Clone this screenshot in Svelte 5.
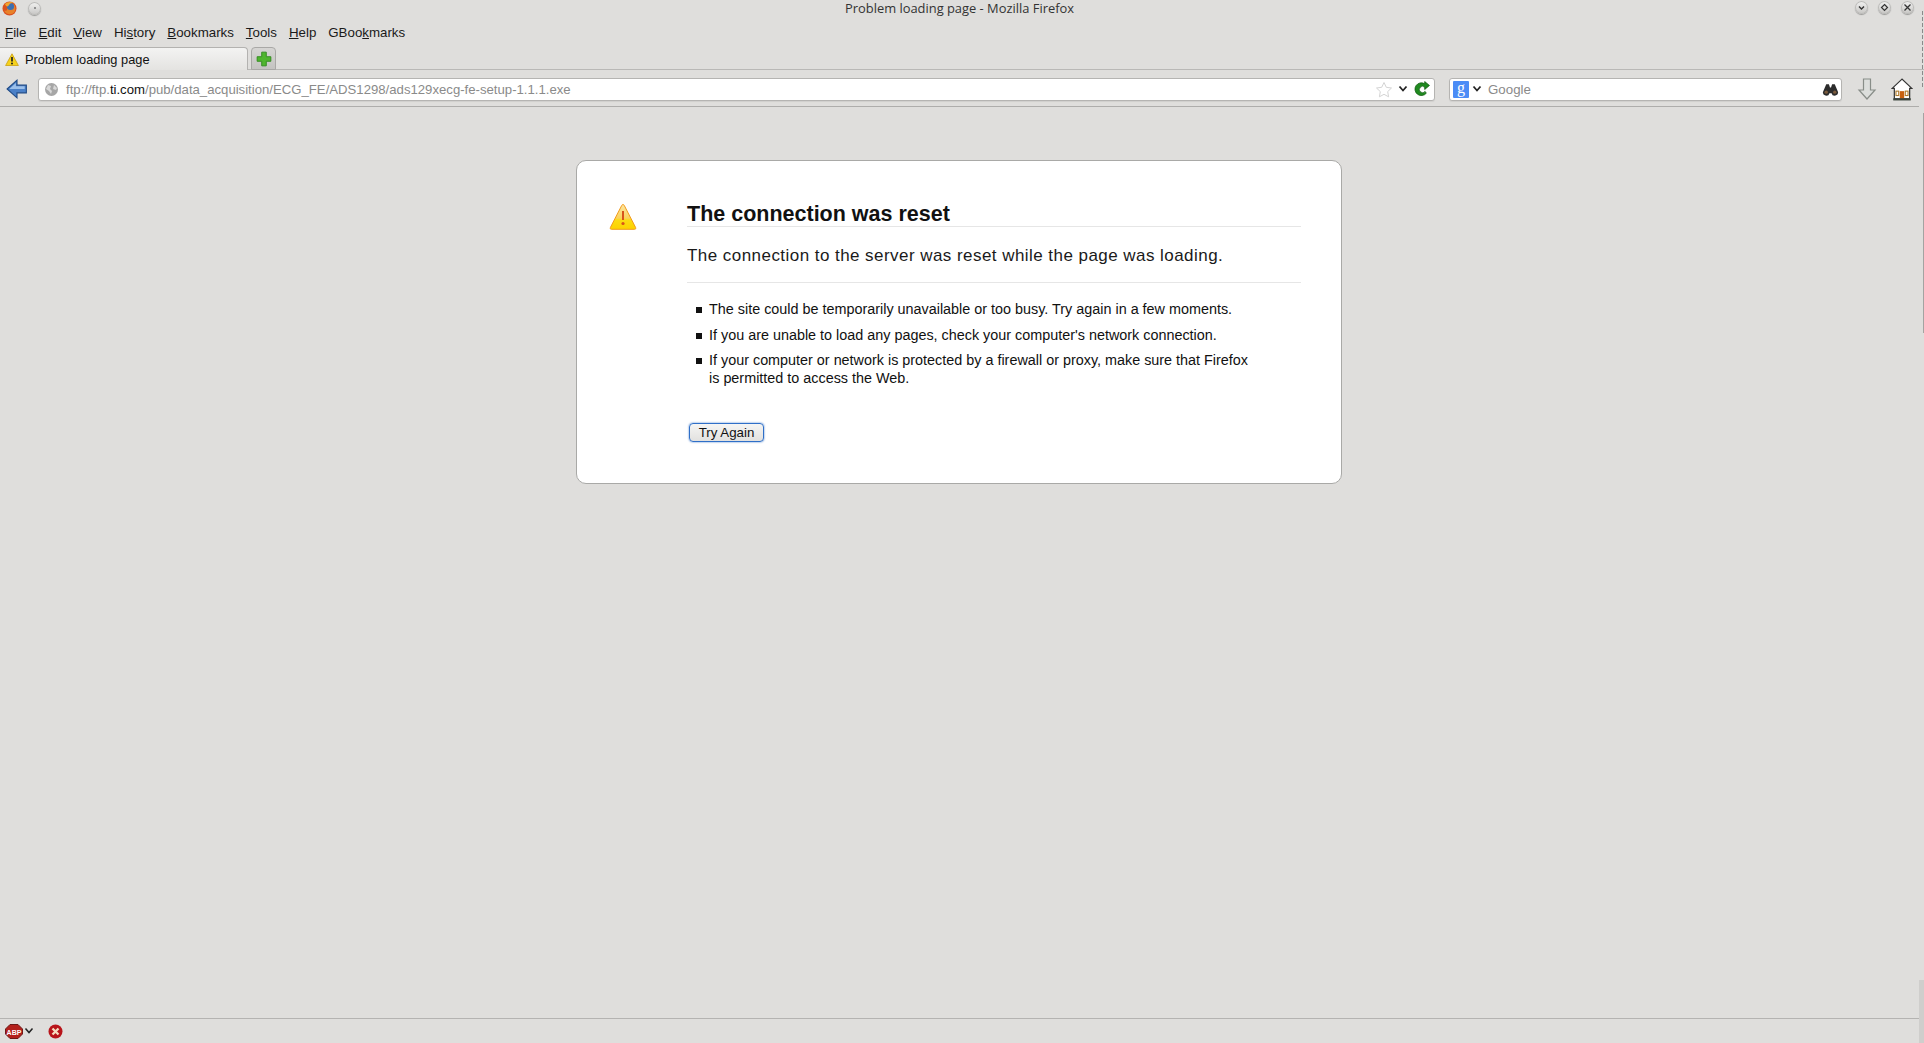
<script>
  const menus = [
    ['F', 'ile'], ['E', 'dit'], ['V', 'iew'], ['Hi', 's', 'tory'], ['B', 'ookmarks'], ['T', 'ools'], ['H', 'elp'], ['GBoo', 'k', 'marks']
  ];
  const bullets = [
    'The site could be temporarily unavailable or too busy. Try again in a few moments.',
    "If you are unable to load any pages, check your computer's network connection.",
    'If your computer or network is protected by a firewall or proxy, make sure that Firefox is permitted to access the Web.'
  ];
</script>

<div class="window">
  <header class="titlebar">
    <div class="tb-left">
      <svg class="ff" width="15" height="15" viewBox="0 0 15 15">
        <circle cx="7.5" cy="7.5" r="7" fill="#d9501e" />
        <path d="M2 9a6 6 0 0 0 11 1c1-3 0-6-2-8 1 3-1 4-3 4S5 8 5 9 2 10 2 9z" fill="#e8822a" />
        <circle cx="8.5" cy="5.5" r="3.6" fill="#3d6fb0" />
        <path d="M3 3c2-2 6-3 9-1-2 0-4 0-5 2S4 6 3 3z" fill="#f2a32c" />
      </svg>
      <span class="wbtn small"><i class="dot"></i></span>
    </div>
    <div class="title">Problem loading page - Mozilla Firefox</div>
    <div class="tb-right">
      <span class="wbtn">
        <svg width="9" height="9" viewBox="0 0 9 9"><path d="M2 3.5l2.5 2.5L7 3.5" fill="none" stroke="#333" stroke-width="1.4" /></svg>
      </span>
      <span class="wbtn">
        <svg width="9" height="9" viewBox="0 0 9 9"><path d="M4.5 1.5l3 3-3 3-3-3z" fill="none" stroke="#333" stroke-width="1.2" /></svg>
      </span>
      <span class="wbtn">
        <svg width="9" height="9" viewBox="0 0 9 9"><path d="M1.5 1.5l6 6M7.5 1.5l-6 6" fill="none" stroke="#333" stroke-width="1.3" /></svg>
      </span>
    </div>
  </header>

  <nav class="menubar">
    {#each menus as m}
      <span class="menu">
        {#if m.length === 2}<u>{m[0]}</u>{m[1]}{:else}{m[0]}<u>{m[1]}</u>{m[2]}{/if}
      </span>
    {/each}
  </nav>

  <div class="tabbar">
    <div class="tab">
      <svg width="14" height="13" viewBox="0 0 14 13"><path d="M7 .8L13.4 12.5H.6z" fill="#f6d21c" stroke="#c9a010" stroke-width=".8" /><path d="M7 4v4.6" stroke="#222" stroke-width="1.7" /><circle cx="7" cy="10.4" r="1" fill="#222" /></svg>
      <span>Problem loading page</span>
    </div>
    <div class="newtab">
      <svg width="16" height="16" viewBox="0 0 14 14"><path d="M5 1h4v4h4v4H9v4H5V9H1V5h4z" fill="#4fb52e" stroke="#2f8a1d" stroke-width=".8" /></svg>
    </div>
  </div>

  <div class="navbar">
    <svg class="back" width="22" height="20" viewBox="0 0 20 18"><path d="M1 9l9-8v4.500h8.500v7H10V17z" fill="#4a80c8" stroke="#1f4a86" stroke-width="1" /><path d="M3 9l6-5.500v3h8v2.500H3z" fill="#9cc0ea" /></svg>
    <div class="urlbar">
      <svg width="15" height="15" viewBox="0 0 15 15"><circle cx="7.5" cy="7.500" r="6.500" fill="#a6a6a6" /><path d="M4 3l3 1-1 3 2 2-1 3-2-3-3-2zM10 3l3 3-1 2-3-1z" fill="#d8d8d8" /></svg>
      <span class="url">ftp://ftp.<b>ti.com</b>/pub/data_acquisition/ECG_FE/ADS1298/ads129xecg-fe-setup-1.1.1.exe</span>
      <svg class="star" width="18" height="17" viewBox="0 0 18 17"><path d="M9 1.500l2.300 4.800 5.200.7-3.800 3.600.9 5.200L9 13.300l-4.600 2.500.9-5.200L1.500 7l5.200-.7z" fill="#fff" stroke="#d4d4d4" stroke-width="1" /></svg>
      <svg class="chev" width="10" height="8" viewBox="0 0 10 8"><path d="M1.500 1.500L5 5.500l3.500-4" fill="none" stroke="#222" stroke-width="1.800" /></svg>
      <svg width="17" height="17" viewBox="0 0 16 16"><path d="M12.500 11.500A6 6 0 1 1 11 2.600V.5l4.500 3.700L11 8V5.800a3 3 0 1 0 .4 4z" fill="#1f8a1f" stroke="#0f5a0f" stroke-width=".7" /></svg>
    </div>
    <div class="searchbar">
      <span class="g">g</span>
      <svg class="chev" width="10" height="8" viewBox="0 0 10 8"><path d="M1.500 1.500L5 5.500l3.500-4" fill="none" stroke="#222" stroke-width="1.800" /></svg>
      <span class="placeholder">Google</span>
      <svg width="17" height="13" viewBox="0 0 16 12"><path d="M4 1h2.500l1 3h1l1-3H12l3 7a3 3 0 0 1-6 1.500H7A3 3 0 0 1 1 8z" fill="#2c2c2c" /><circle cx="4" cy="8.500" r="1.600" fill="#7a5a3c" /><circle cx="12" cy="8.500" r="1.600" fill="#7a5a3c" /></svg>
    </div>
    <svg class="down" width="20" height="23" viewBox="0 0 20 23"><path d="M6.500 1h7v11h4.500L10 21 2 12h4.500z" fill="#dcdedc" stroke="#888d88" stroke-width="1.200" /></svg>
    <svg class="home" width="22" height="23" viewBox="0 0 20 21">
      <path d="M10 1L1 9.500h2V19h14V9.500h2z" fill="#fff" stroke="#333" stroke-width="1.100" />
      <rect x="8" y="12" width="4" height="7" fill="#c7600f" />
      <rect x="4.500" y="12" width="2.500" height="4" fill="#fff" stroke="#b07a28" />
      <rect x="13" y="12" width="2.500" height="4" fill="#fff" stroke="#b07a28" />
      <rect x="2" y="18.500" width="16" height="2" fill="#3c443c" />
    </svg>
  </div>

  <main class="content">
    <section class="card">
      <svg class="warn" width="28" height="28" viewBox="0 0 28 28">
        <defs><linearGradient id="w" x1="0" y1="0" x2="0" y2="1"><stop offset="0" stop-color="#fbe6a4" /><stop offset=".55" stop-color="#fbd25c" /><stop offset=".62" stop-color="#fbdc12" /><stop offset="1" stop-color="#fdd100" /></linearGradient></defs>
        <path d="M14 1.500c.6 0 1 .4 1.300 1L26.600 24.500c.5 1 0 1.800-1 1.800H2.400c-1 0-1.500-.8-1-1.800L12.700 2.500c.3-.6.700-1 1.300-1z" fill="url(#w)" stroke="#f29a1a" stroke-width="1" />
        <path d="M14 8v9" stroke="#d8541a" stroke-width="2" />
        <circle cx="14" cy="20.500" r="1.600" fill="#d8541a" />
      </svg>
      <div class="body">
        <h1>The connection was reset</h1>
        <p class="short">The connection to the server was reset while the page was loading.</p>
        <hr />
        <ul>
          {#each bullets as b}<li>{b}</li>{/each}
        </ul>
        <button type="button">Try Again</button>
      </div>
    </section>
  </main>

  <footer class="statusbar">
    <svg width="18" height="15" viewBox="0 0 18 15"><path d="M5 .5h8L17.500 5v5L13 14.500H5L.5 10V5z" fill="#b3201c" stroke="#6d1a18" /><text x="9" y="10.500" text-anchor="middle" class="abp">ABP</text></svg>
    <svg class="chev" width="10" height="8" viewBox="0 0 10 8"><path d="M1.500 1.500L5 5.500l3.500-4" fill="none" stroke="#222" stroke-width="1.500" /></svg>
    <svg class="stop" width="15" height="15" viewBox="0 0 15 15"><circle cx="7.500" cy="7.500" r="7" fill="#b8141a" /><path d="M4.500 4.500l6 6M10.500 4.500l-6 6" stroke="#f4dcc0" stroke-width="2.300" /></svg>
  </footer>

  <div class="edge-top"></div>
  <div class="edge-thumb"></div>
  <div class="edge-grip"></div>
</div>

<style>
  :global(body) {
    margin: 0;
    background: #dfdedc;
  }
  .window {
    position: relative;
    height: 1043px;
    display: flex;
    flex-direction: column;
    overflow: hidden;
    background: #dfdedc;
    color: #111;
    font-family: "Liberation Sans", Arial, sans-serif;
    font-size: 13px;
  }
  svg { display: block; flex: none; }
  .titlebar {
    height: 20px;
    display: grid;
    grid-template-columns: 1fr auto 1fr;
    align-items: center;
    flex: none;
    padding-right: 5px;
    box-sizing: border-box;
  }
  .tb-left { display: flex; align-items: center; gap: 11px; padding-left: 2px; margin-top: -4px; }
  .title { font-family: "Open Sans", "Noto Sans", sans-serif; font-size: 12.9px; color: #333; margin-top: -5px; }
  .tb-right { display: flex; justify-content: flex-end; gap: 10px; padding-right: 5px; margin-top: -6px; }
  .wbtn {
    width: 13px;
    height: 13px;
    border-radius: 50%;
    display: flex;
    align-items: center;
    justify-content: center;
    background: linear-gradient(#f3f3f2, #c6c5c3);
    box-shadow: 0 1px 1px #9a9a98, inset 0 0 0 1px #bbbab8;
  }
  .dot { width: 2px; height: 2px; background: #777; border-radius: 50%; }

  .menubar {
    height: 25px;
    display: flex;
    align-items: center;
    padding-left: 5px;
    gap: 12px;
    flex: none;
    font-size: 13.300px;
    color: #1a1a1a;
  }
  .menu u { text-underline-offset: 1px; }

  .tabbar {
    height: 25px;
    box-sizing: border-box;
    display: flex;
    align-items: flex-end;
    gap: 3px;
    flex: none;
    border-bottom: 1px solid #b9b8b6;
  }
  .tab {
    width: 248px;
    height: 23px;
    margin-bottom: -1px;
    display: flex;
    align-items: center;
    gap: 6px;
    padding: 0 0 0 5px;
    box-sizing: border-box;
    background: linear-gradient(#f3f3f2, #e4e3e1);
    border: 1px solid #b3b2b0;
    border-bottom: none;
    border-left: none;
    border-radius: 0 4px 0 0;
    font-size: 12.800px;
    position: relative;
  }
  .newtab {
    width: 25px;
    height: 23px;
    box-sizing: border-box;
    margin-bottom: -1px;
    display: flex;
    align-items: center;
    justify-content: center;
    background: linear-gradient(#d6d5d3, #c4c3c1);
    border: 1px solid #a9a8a6;
    border-radius: 4px 4px 0 0;
  }

  .navbar {
    height: 37px;
    display: flex;
    align-items: center;
    flex: none;
    border-bottom: 1px solid #aeadab;
    padding: 2px 0 0 6px;
    margin-right: 5px;
    box-sizing: border-box;
  }
  .back { margin-right: 10px; }
  .urlbar, .searchbar {
    height: 23px;
    display: flex;
    align-items: center;
    box-sizing: border-box;
    background: #fff;
    border: 1px solid #b5b4b2;
    border-radius: 3px;
    box-shadow: 0 1px 1px #d0cfcd;
  }
  .urlbar { width: 1397px; padding: 0 4px 0 5px; gap: 0; }
  .url { flex: 1; margin-left: 7px; color: #8a8a8a; font-size: 13.170px; white-space: nowrap; }
  .url b { font-weight: 400; color: #111; }
  .star { margin-right: 5px; }
  .chev { margin-right: 5px; }
  .searchbar { width: 393px; margin-left: 14px; padding: 0 2px 0 3px; }
  .g {
    width: 16px;
    height: 17px;
    background: #4b8cf6;
    color: #fff;
    border-radius: 1px;
    font-family: "Liberation Serif", serif;
    font-size: 16px;
    line-height: 13px;
    text-align: center;
    margin-right: 3px;
  }
  .searchbar .chev { margin-right: 6px; }
  .placeholder { flex: 1; color: #8a8a8a; font-size: 13.300px; }
  .down { margin-left: 15px; }
  .home { margin-left: 14px; }

  .content { flex: 1; display: flex; justify-content: center; align-items: flex-start; padding-top: 53px; padding-right: 6px; }
  .card {
    position: relative;
    width: 766px;
    height: 324px;
    box-sizing: border-box;
    background: #fff;
    border: 1px solid #a9a9a7;
    border-radius: 10px;
    padding: 41px 40px 0 110px;
  }
  .warn { position: absolute; left: 32px; top: 42px; }
  h1 {
    margin: 0;
    font-size: 21.500px;
    line-height: 24px;
    font-weight: 700;
    color: #111;
    border-bottom: 1px solid #e6e6e6;
  }
  .short {
    margin: 18px 0 0;
    font-size: 17px;
    line-height: 22px;
    letter-spacing: .45px;
    color: #1a1a1a;
  }
  hr { border: none; border-top: 1px solid #e6e6e6; margin: 15px 0 0; }
  ul {
    list-style: none;
    margin: 17px 0 0;
    padding: 0 44px 0 22px;
    font-size: 14.380px;
    line-height: 18px;
    color: #111;
  }
  li { position: relative; margin-bottom: 7.500px; }
  li::before {
    content: "";
    position: absolute;
    left: -13px;
    top: 7px;
    width: 6px;
    height: 6px;
    background: #111;
  }
  button {
    display: block;
    margin: 36px 0 0 2px;
    width: 75px;
    height: 19px;
    padding: 0;
    box-sizing: border-box;
    font: 13.300px "Liberation Sans", Arial, sans-serif;
    color: #111;
    background: linear-gradient(#f5f5f4, #e2e1df);
    border: 1px solid #2f6fc8;
    box-shadow: 0 0 2px #3a76c8;
    border-radius: 4px;
  }

  .statusbar {
    height: 25px;
    box-sizing: border-box;
    display: flex;
    align-items: center;
    flex: none;
    padding-left: 5px;
    gap: 1px;
    border-top: 1px solid #b4b3b1;
    margin-right: 5px;
  }
  .abp { font: 700 7px "Liberation Sans", sans-serif; fill: #fff; }
  .stop { margin-left: 8px; }

  .edge-top {
    position: absolute; right: 0; top: 10px; width: 3px; height: 78px;
    background-image: radial-gradient(#8a8a8a 0.8px, transparent 1px);
    background-size: 3px 6px;
  }
  .edge-thumb {
    position: absolute; right: 0; top: 113px; width: 1px; height: 220px;
    background: #a4a3a1;
  }
  .edge-grip {
    position: absolute; right: 0; top: 980px; width: 5px; height: 63px;
    background: #cfcecc;
  }
</style>
